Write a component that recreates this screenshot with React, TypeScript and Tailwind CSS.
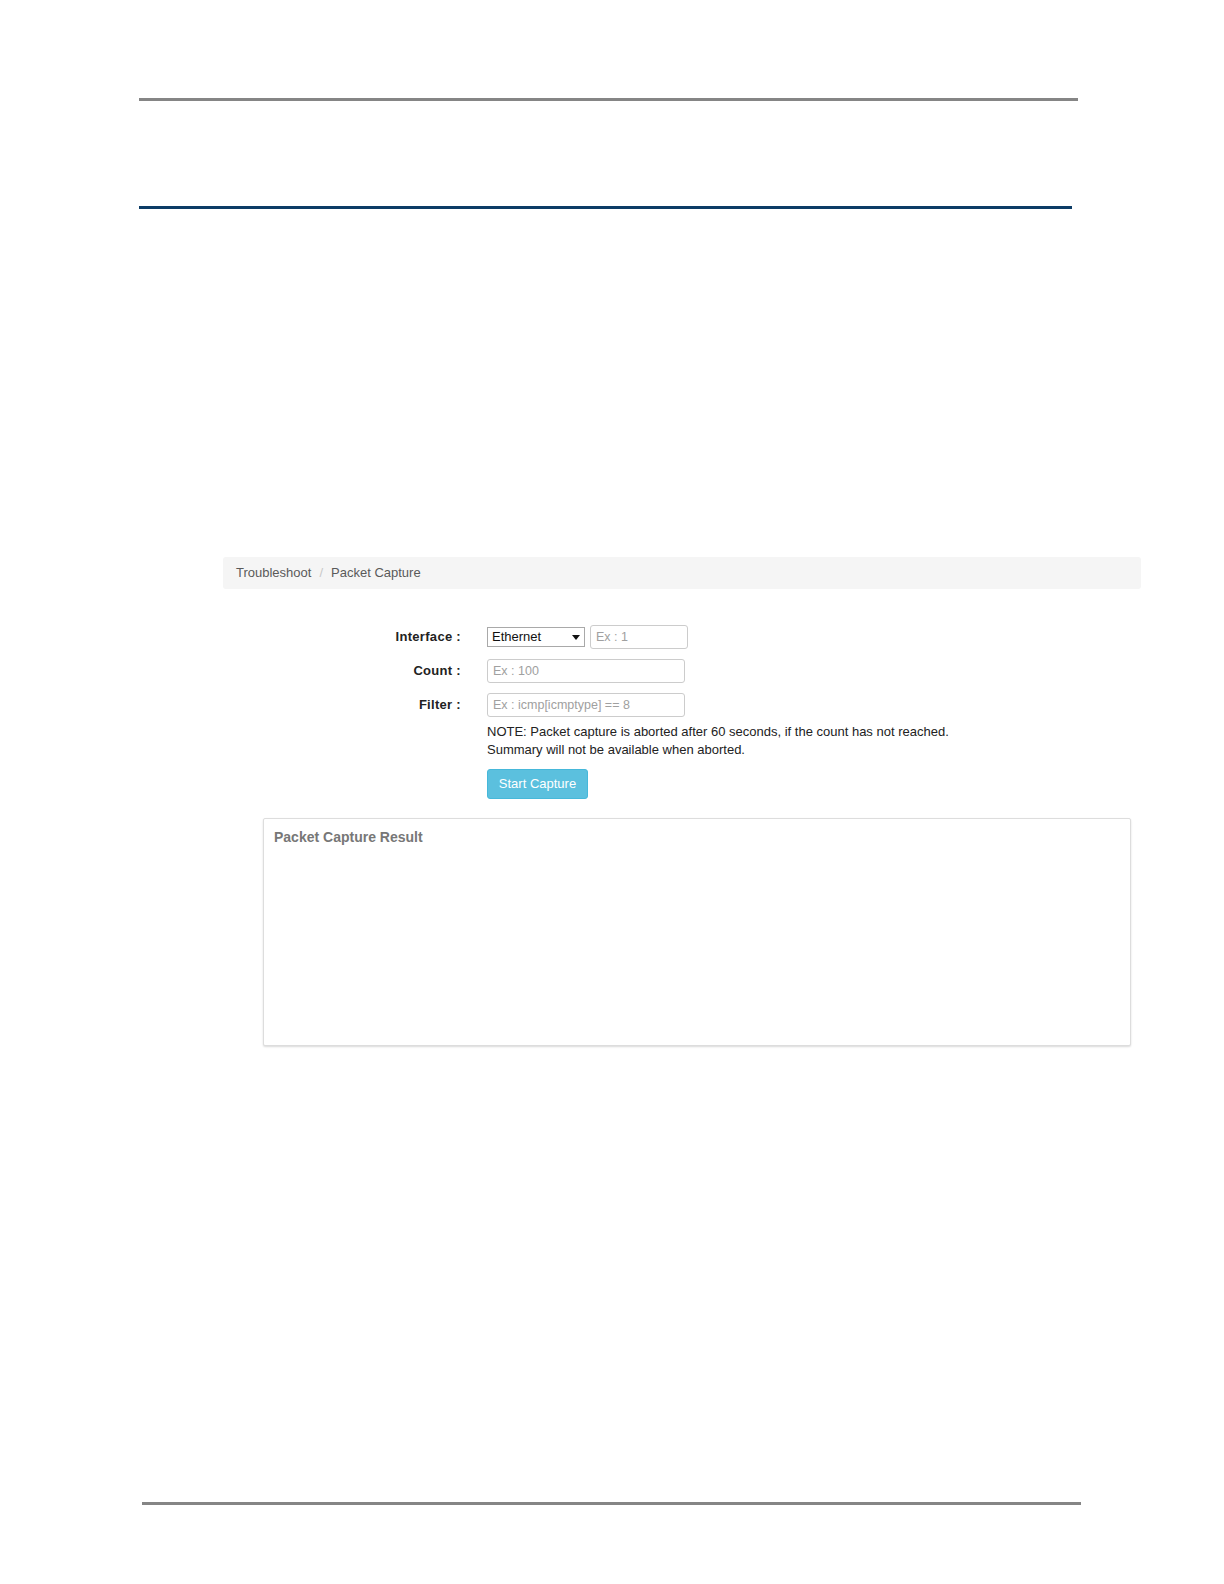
import React from 'react';

const font = { fontFamily: '"Liberation Sans", Arial, sans-serif' };

const TextBox = ({ placeholder, width }: { placeholder: string; width: string }) => (
  <input
    readOnly
    placeholder={placeholder}
    className={`${width} h-[24px] border border-[#cccccc] rounded-[3px] px-[5px] text-[12.5px] text-[#333] placeholder:text-[#a0a0a0] outline-none bg-white`}
  />
);

const FormRow = ({ label, children }: { label: string; children: React.ReactNode }) => (
  <div className="flex items-center h-[24px]">
    <div className="w-[238px] text-right text-[13px] font-bold text-[#222] tracking-[0.3px]">{label}</div>
    <div className="ml-[26px] flex items-center gap-[5px]">{children}</div>
  </div>
);

const App = () => {
  return (
    <div className="w-[1224px] min-h-[1584px] bg-white" style={font}>
      {/* page header rules */}
      <div className="pt-[98px]">
        <div className="ml-[139px] w-[939px] h-[3px] bg-[#858585]" />
        <div className="ml-[139px] mt-[105px] w-[933px] h-[3px] bg-[#0c3c66]" />
      </div>

      {/* breadcrumb */}
      <div className="ml-[223px] mt-[348px] w-[918px] h-[32px] bg-[#f5f5f5] rounded-[3px] flex items-center px-[13px] text-[13px] text-[#5a5a5a]">
        <span>Troubleshoot</span>
        <span className="mx-[8px] text-[#c8c8c8]">/</span>
        <span>Packet Capture</span>
      </div>

      {/* form */}
      <div className="ml-[223px] mt-[36px] flex flex-col gap-[10px]">
        <FormRow label="Interface :">
          <div className="w-[98px] h-[20px] border border-[#a9a9a9] bg-white flex items-center justify-between pl-[4px] pr-[4px] text-[13px] text-[#111]">
            <span>Ethernet</span>
            <svg width="8" height="5" viewBox="0 0 8 5">
              <path d="M0 0 L8 0 L4 5 Z" fill="#111" />
            </svg>
          </div>
          <TextBox placeholder="Ex : 1" width="w-[98px]" />
        </FormRow>
        <FormRow label="Count :">
          <TextBox placeholder="Ex : 100" width="w-[198px]" />
        </FormRow>
        <FormRow label="Filter :">
          <TextBox placeholder="Ex : icmp[icmptype] == 8" width="w-[198px]" />
        </FormRow>
      </div>

      <div className="ml-[487px] mt-[6px] text-[13px] leading-[18px] text-[#222]">
        <div>NOTE: Packet capture is aborted after 60 seconds, if the count has not reached.</div>
        <div>Summary will not be available when aborted.</div>
      </div>

      <button className="ml-[487px] mt-[10px] w-[101px] h-[30px] rounded-[3px] bg-[#5bc0de] border border-[#46b8da] text-white text-[13px]">
        Start Capture
      </button>

      {/* result panel */}
      <div className="ml-[263px] mt-[19px] w-[868px] h-[228px] border border-[#dddddd] rounded-[2px] bg-white shadow-[0_1px_2px_rgba(0,0,0,0.15)] px-[10px] pt-[8px]">
        <div className="text-[14px] font-bold text-[#777777]">Packet Capture Result</div>
      </div>

      {/* footer rule */}
      <div className="ml-[142px] mt-[456px] w-[939px] h-[3px] bg-[#858585]" />
    </div>
  );
};

export default App;
